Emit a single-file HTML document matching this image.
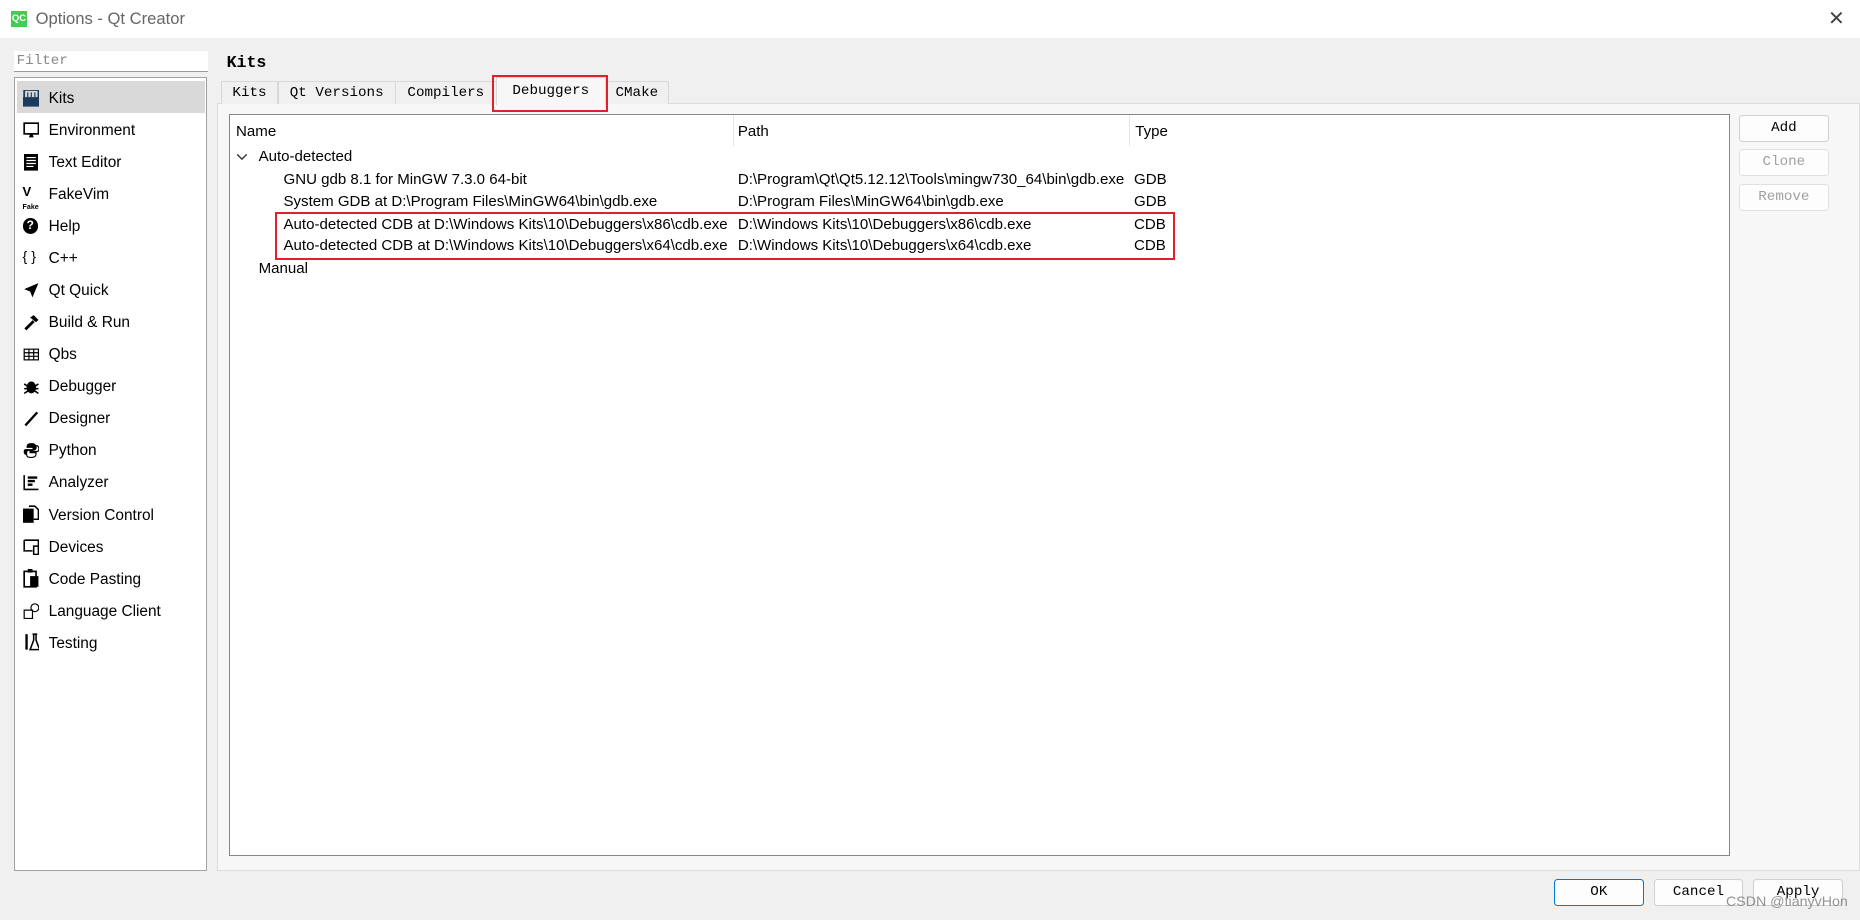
<!DOCTYPE html>
<html><head><meta charset="utf-8"><style>
html,body{margin:0;padding:0;width:1860px;height:920px;overflow:hidden;background:#f0f0f0}
#w{zoom:1.18622;position:relative;width:1568px;height:776px;background:#f0f0f0;font-family:"Liberation Sans",sans-serif;font-size:13px;color:#000}
.a{position:absolute;white-space:nowrap}
.mono{font-family:"Liberation Mono",monospace;font-size:12px}
#title{left:0;top:0;width:1568px;height:32px;background:#fff}
.it{position:absolute;left:41px;font-size:13px;line-height:16px;margin-top:2px}
.ic{position:absolute;left:19px;width:13px;height:13px}
.tab{position:absolute;top:68px;height:19px;border:1px solid #d8d8d8;border-bottom:none;background:#f0f0f0;text-align:center;line-height:19px}
.row{position:absolute;font-size:12.7px;line-height:16px;margin-top:2px}
.btn{position:absolute;width:74px;height:21px;border:1px solid #d0d0d0;border-radius:3px;background:#fdfdfd;text-align:center;line-height:21px}
</style></head><body><div id="w">
<div class="a" id="title"></div>
<div class="a" style="left:9px;top:9px;width:14px;height:14px;background:#41cd52;color:#fff;font-size:8px;font-weight:bold;line-height:14px;text-align:center">QC</div>
<div class="a" style="left:30px;top:8px;font-size:14px;color:#666">Options - Qt Creator</div>
<div class="a" style="left:1541px;top:5px;font-size:17px;color:#444">✕</div>

<div class="a mono" style="left:12px;top:43px;width:161px;height:17px;background:#fff;border-bottom:1px solid #999;color:#888;line-height:17px;padding-left:2px">Filter</div>
<div class="a" style="left:12px;top:65px;width:161px;height:668px;background:#fff;border:1px solid #a0a0a0"></div>
<div class="a" style="left:14px;top:68px;width:159px;height:27px;background:#d9d9d9"></div>

<svg class="a" style="left:19px;top:76px" width="14" height="14"><rect x="0" y="6" width="14" height="8" fill="#1b3a5c"/><rect x="1" y="0" width="12" height="7" fill="none" stroke="#1b3a5c" stroke-width="1.5"/><path d="M4 2v4M7 2v4M10 2v4" stroke="#1b3a5c"/></svg>
<div class="it" style="top:74px">Kits</div>
<svg class="a" style="left:19px;top:103px" width="14" height="14"><rect x="1" y="1" width="12" height="9" fill="none" stroke="#000" stroke-width="1.4"/><path d="M5 13h4l-1-3h-2z"/></svg>
<div class="it" style="top:101px">Environment</div>
<svg class="a" style="left:20px;top:130px" width="12" height="14"><rect width="12" height="14"/><path d="M2 3h8M2 5.5h8M2 8h8M2 10.5h6" stroke="#fff"/></svg>
<div class="it" style="top:128px">Text Editor</div>
<div class="a" style="left:19px;top:156px;font-size:11px;font-weight:bold;line-height:11px">V<br><span style="font-size:6px">Fake</span></div>
<div class="it" style="top:155px">FakeVim</div>
<div class="a" style="left:19px;top:184px;width:13px;height:13px;border-radius:50%;background:#000;color:#fff;font-size:10px;font-weight:bold;text-align:center;line-height:13px">?</div>
<div class="it" style="top:182px">Help</div>
<div class="a" style="left:19px;top:210px;font-size:12px">{ }</div>
<div class="it" style="top:209px">C++</div>
<svg class="a" style="left:19px;top:238px" width="14" height="14"><path d="M13 1L1 6l5 2 2 5z"/></svg>
<div class="it" style="top:236px">Qt Quick</div>
<svg class="a" style="left:19px;top:265px" width="14" height="14"><path d="M2 13l7-7" stroke="#000" stroke-width="2.4"/><path d="M6 3l3-2 4 4-2 2z"/></svg>
<div class="it" style="top:263px">Build &amp; Run</div>
<svg class="a" style="left:19px;top:293px" width="14" height="12"><rect x="1" y="1" width="12" height="9" fill="none" stroke="#000"/><path d="M1 4h12M1 7h12M5 1v9M9 1v9" stroke="#000"/></svg>
<div class="it" style="top:290px">Qbs</div>
<svg class="a" style="left:19px;top:319px" width="14" height="14"><ellipse cx="7" cy="8" rx="4" ry="5"/><path d="M1 5l3 2M13 5l-3 2M1 9h3M13 9h-3M1 13l3-2M13 13l-3-2" stroke="#000" stroke-width="1.3"/></svg>
<div class="it" style="top:317px">Debugger</div>
<svg class="a" style="left:19px;top:346px" width="14" height="14"><path d="M2 13L12 2" stroke="#000" stroke-width="2"/></svg>
<div class="it" style="top:344px">Designer</div>
<svg class="a" style="left:19px;top:373px" width="14" height="14"><path d="M7 1C3 1 3 3 3 5H8V6H2C0 6 0 11 3 11V9C3 8 4 7 6 7H9C11 7 11 6 11 4 11 1 9 1 7 1z"/><path d="M7 13C11 13 11 11 11 9H6V8H12C14 8 14 3 11 3V5C11 6 10 7 8 7H5C3 7 3 8 3 10 3 13 5 13 7 13z" fill="none" stroke="#000"/></svg>
<div class="it" style="top:371px">Python</div>
<svg class="a" style="left:19px;top:400px" width="14" height="14"><path d="M1 1v12h12" fill="none" stroke="#000" stroke-width="1.3"/><path d="M4 3h8M4 6h6M4 9h4" stroke="#000" stroke-width="2"/></svg>
<div class="it" style="top:398px">Analyzer</div>
<svg class="a" style="left:19px;top:426px" width="14" height="16"><rect x="0" y="3" width="9" height="12"/><path d="M5 1h5l3 3v8H9" fill="none" stroke="#000" stroke-width="1.3"/></svg>
<div class="it" style="top:425px">Version Control</div>
<svg class="a" style="left:19px;top:454px" width="14" height="14"><path d="M1 1h12v8" fill="none" stroke="#000" stroke-width="1.3"/><path d="M1 1v9h7" fill="none" stroke="#000" stroke-width="1.3"/><rect x="9" y="6" width="4" height="7" fill="none" stroke="#000" stroke-width="1.3"/></svg>
<div class="it" style="top:452px">Devices</div>
<svg class="a" style="left:19px;top:480px" width="14" height="16"><rect x="1" y="2" width="10" height="13" fill="none" stroke="#000" stroke-width="1.4"/><rect x="4" y="0" width="4" height="3"/><rect x="6" y="6" width="7" height="9"/></svg>
<div class="it" style="top:479px">Code Pasting</div>
<svg class="a" style="left:19px;top:508px" width="14" height="14"><path d="M1 6h7v7H1z" fill="none" stroke="#000"/><circle cx="10" cy="4" r="3.3" fill="none" stroke="#000"/></svg>
<div class="it" style="top:506px">Language Client</div>
<svg class="a" style="left:19px;top:534px" width="14" height="16"><path d="M2 1v13h2V1z"/><path d="M8 1h4M9 1v5l-3 8h8l-3-8V1" fill="none" stroke="#000" stroke-width="1.3"/></svg>
<div class="it" style="top:533px">Testing</div>

<div class="a mono" style="left:191px;top:45px;font-weight:bold;font-size:14px">Kits</div>
<div class="a" style="left:183px;top:87px;width:1383px;height:646px;background:#f7f7f7;border:1px solid #dcdcdc"></div>
<div class="tab mono" style="left:186px;width:47px">Kits</div>
<div class="tab mono" style="left:234px;width:98px">Qt Versions</div>
<div class="tab mono" style="left:333px;width:84px">Compilers</div>
<div class="tab mono" style="left:418px;top:65px;height:23px;width:91px;background:#f7f7f7;line-height:23px">Debuggers</div>
<div class="tab mono" style="left:510px;width:52px">CMake</div>
<div class="a" style="left:415px;top:63px;width:94px;height:28px;border:2px solid #e0202a"></div>

<div class="a" style="left:193px;top:96px;width:1264px;height:624px;background:#fff;border:1px solid #828790"></div>
<div class="a" style="left:618px;top:97px;width:1px;height:26px;background:#e5e5e5"></div>
<div class="a" style="left:952px;top:97px;width:1px;height:26px;background:#e5e5e5"></div>
<div class="row" style="left:199px;top:102px">Name</div>
<div class="row" style="left:622px;top:102px">Path</div>
<div class="row" style="left:957px;top:102px">Type</div>
<svg class="a" style="left:199px;top:128px" width="10" height="8"><path d="M1 2l4 4 4-4" fill="none" stroke="#333" stroke-width="1.2"/></svg>
<div class="row" style="left:218px;top:123px">Auto-detected</div>
<div class="row" style="left:239px;top:142px">GNU gdb 8.1 for MinGW 7.3.0 64-bit</div>
<div class="row" style="left:622px;top:142px">D:\Program\Qt\Qt5.12.12\Tools\mingw730_64\bin\gdb.exe</div>
<div class="row" style="left:956px;top:142px">GDB</div>
<div class="row" style="left:239px;top:161px">System GDB at D:\Program Files\MinGW64\bin\gdb.exe</div>
<div class="row" style="left:622px;top:161px">D:\Program Files\MinGW64\bin\gdb.exe</div>
<div class="row" style="left:956px;top:161px">GDB</div>
<div class="row" style="left:239px;top:180px">Auto-detected CDB at D:\Windows Kits\10\Debuggers\x86\cdb.exe</div>
<div class="row" style="left:622px;top:180px">D:\Windows Kits\10\Debuggers\x86\cdb.exe</div>
<div class="row" style="left:956px;top:180px">CDB</div>
<div class="row" style="left:239px;top:198px">Auto-detected CDB at D:\Windows Kits\10\Debuggers\x64\cdb.exe</div>
<div class="row" style="left:622px;top:198px">D:\Windows Kits\10\Debuggers\x64\cdb.exe</div>
<div class="row" style="left:956px;top:198px">CDB</div>
<div class="row" style="left:218px;top:217px">Manual</div>
<div class="a" style="left:232px;top:179px;width:755px;height:37px;border:2px solid #e0202a"></div>

<div class="btn mono" style="left:1466px;top:97px">Add</div>
<div class="btn mono" style="left:1466px;top:126px;color:#a0a0a0;border-color:#e0e0e0">Clone</div>
<div class="btn mono" style="left:1466px;top:155px;color:#a0a0a0;border-color:#e0e0e0">Remove</div>

<div class="btn mono" style="left:1310px;top:741px;border-color:#0078d4">OK</div>
<div class="btn mono" style="left:1394px;top:741px">Cancel</div>
<div class="btn mono" style="left:1478px;top:741px">Apply</div>
<div class="a" style="left:1455px;top:754px;font-size:12px;color:rgba(120,120,120,0.8)">CSDN @tianyvHon</div>
</div></body></html>
